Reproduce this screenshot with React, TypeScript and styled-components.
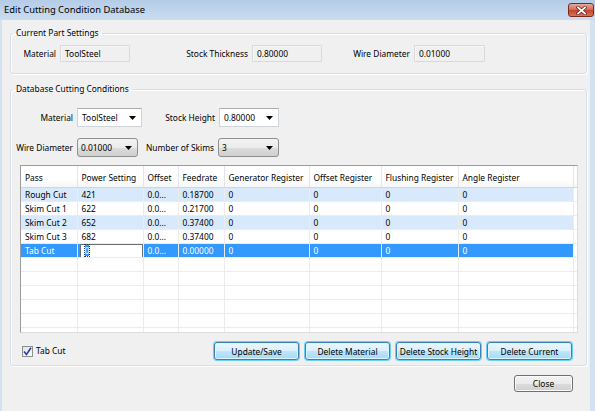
import * as React from 'react';
import styled, { createGlobalStyle } from 'styled-components';

interface PassRow {
  pass: string;
  power: string;
  offset: string;
  feed: string;
  generator: string;
  offsetReg: string;
  flushing: string;
  angle: string;
}

const columns = [
  { title: 'Pass', width: 56 },
  { title: 'Power Setting', width: 66 },
  { title: 'Offset', width: 35 },
  { title: 'Feedrate', width: 46 },
  { title: 'Generator Register', width: 85 },
  { title: 'Offset Register', width: 72 },
  { title: 'Flushing Register', width: 77 },
  { title: 'Angle Register', width: 115 },
];

const rows: PassRow[] = [
  { pass: 'Rough Cut', power: '421', offset: '0.0...', feed: '0.18700', generator: '0', offsetReg: '0', flushing: '0', angle: '0' },
  { pass: 'Skim Cut 1', power: '622', offset: '0.0...', feed: '0.21700', generator: '0', offsetReg: '0', flushing: '0', angle: '0' },
  { pass: 'Skim Cut 2', power: '652', offset: '0.0...', feed: '0.37400', generator: '0', offsetReg: '0', flushing: '0', angle: '0' },
  { pass: 'Skim Cut 3', power: '682', offset: '0.0...', feed: '0.37400', generator: '0', offsetReg: '0', flushing: '0', angle: '0' },
  { pass: 'Tab Cut', power: '0', offset: '0.0...', feed: '0.00000', generator: '0', offsetReg: '0', flushing: '0', angle: '0' },
];

const SELECTED = 4;

function Arrow() {
  return (
    <svg width="7" height="4" viewBox="0 0 7 4">
      <polygon points="0,0 7,0 3.5,4" fill="#000" />
    </svg>
  );
}

function App() {
  return (
    <Window>
      <GlobalStyle />
      <TitleBar>
        <Caption>Edit Cutting Condition Database</Caption>
        <CloseX>
          <svg width="11" height="9" viewBox="0 0 11 9">
            <path d="M2 1.5 L9 7.5 M9 1.5 L2 7.5" stroke="#5a2318" strokeWidth="3.2" strokeLinecap="square" />
            <path d="M2 1.5 L9 7.5 M9 1.5 L2 7.5" stroke="#fff" strokeWidth="1.8" strokeLinecap="square" />
          </svg>
        </CloseX>
      </TitleBar>
      <Client>
        <Group>
          <Legend>Current Part Settings</Legend>
          <FieldRow>
            <Label $width={49}>Material</Label>
            <ReadBox $width={70}>ToolSteel</ReadBox>
            <Label $width={122}>Stock Thickness</Label>
            <ReadBox $width={70}>0.80000</ReadBox>
            <Label $width={92}>Wire Diameter</Label>
            <ReadBox $width={71}>0.01000</ReadBox>
          </FieldRow>
        </Group>

        <Group $second>
          <Legend>Database Cutting Conditions</Legend>
          <ComboRow>
            <Label $width={66}>Material</Label>
            <EditCombo $width={65}>
              <span>ToolSteel</span>
              <Arrow />
            </EditCombo>
            <Label $width={77}>Stock Height</Label>
            <EditCombo $width={60}>
              <span>0.80000</span>
              <Arrow />
            </EditCombo>
          </ComboRow>
          <ComboRow $lower>
            <Label $width={66}>Wire Diameter</Label>
            <ListCombo $width={61}>
              <span>0.01000</span>
              <Arrow />
            </ListCombo>
            <Label $width={80}>Number of Skims</Label>
            <ListCombo $width={61}>
              <span>3</span>
              <Arrow />
            </ListCombo>
          </ComboRow>

          <Grid>
            <Table>
              <colgroup>
                {columns.map((c) => (
                  <col key={c.title} style={{ width: c.width }} />
                ))}
                <col />
              </colgroup>
              <thead>
                <tr>
                  {columns.map((c) => (
                    <HeadCell key={c.title}>{c.title}</HeadCell>
                  ))}
                  <HeadCell $blank />
                </tr>
              </thead>
              <tbody>
                {rows.map((r, i) => (
                  <BodyRow key={r.pass} $alt={i % 2 === 0} $selected={i === SELECTED}>
                    <Cell>{r.pass}</Cell>
                    {i === SELECTED ? (
                      <EditCell>
                        <EditBox>
                          <Marked>{r.power}</Marked>
                        </EditBox>
                      </EditCell>
                    ) : (
                      <Cell>{r.power}</Cell>
                    )}
                    <Cell>{r.offset}</Cell>
                    <Cell>{r.feed}</Cell>
                    <Cell>{r.generator}</Cell>
                    <Cell>{r.offsetReg}</Cell>
                    <Cell>{r.flushing}</Cell>
                    <Cell>{r.angle}</Cell>
                    <Cell $blank />
                  </BodyRow>
                ))}
                {[0, 1, 2, 3, 4, 5].map((n) => (
                  <BodyRow key={'empty' + n}>
                    {columns.map((c) => (
                      <Cell key={c.title} />
                    ))}
                    <Cell $blank />
                  </BodyRow>
                ))}
              </tbody>
            </Table>
          </Grid>

          <ActionRow>
            <CheckLabel>
              <CheckBox>
                <svg width="9" height="9" viewBox="0 0 9 9">
                  <path d="M1 4.5 L3.5 7.5 L8 0.8" fill="none" stroke="#2b3f9c" strokeWidth="1.6" />
                </svg>
              </CheckBox>
              Tab Cut
            </CheckLabel>
            <Buttons>
              <GlowButton>Update/Save</GlowButton>
              <GlowButton>Delete Material</GlowButton>
              <GlowButton>Delete Stock Height</GlowButton>
              <GlowButton>Delete Current</GlowButton>
            </Buttons>
          </ActionRow>
        </Group>

        <Footer>
          <PlainButton>Close</PlainButton>
        </Footer>
      </Client>
    </Window>
  );
}

const GlobalStyle = createGlobalStyle`
  html, body {
    margin: 0;
    padding: 0;
    background: #f0f0f0;
  }
  body {
    font-family: "Noto Sans", "Liberation Sans", sans-serif;
    font-size: 8.4px;
    color: #000;
  }
`;

const Window = styled.div`
  width: 595px;
  height: 411px;
  display: flex;
  flex-direction: column;
  overflow: hidden;
  background: #d3e2f2;
`;

const TitleBar = styled.div`
  height: 20px;
  flex: none;
  display: flex;
  align-items: flex-start;
  justify-content: space-between;
  background: linear-gradient(#b4cce7, #cbddf0);
`;

const Caption = styled.div`
  margin: 3px 0 0 4px;
  font-size: 9.4px;
  line-height: 13px;
  color: #000;
`;

const CloseX = styled.div`
  width: 26px;
  height: 14px;
  margin: 3px 1px 0 0;
  display: flex;
  align-items: center;
  justify-content: center;
  border: 1px solid #7a2a1c;
  border-radius: 3px;
  box-sizing: border-box;
  background: linear-gradient(#e9a99b, #d4705d 45%, #c4452f 55%, #d8735b);
`;

const Client = styled.div`
  flex: 1;
  margin: 0 5px 0 2px;
  padding-top: 7px;
  background: #f0f0f0;
  display: flex;
  flex-direction: column;
`;

const Group = styled.fieldset<{ $second?: boolean }>`
  margin: ${(p) => (p.$second ? '9px' : '0')} 3px 0 8px;
  padding: ${(p) => (p.$second ? '13px 0 5px 0' : '6px 0 11px 0')};
  border: 1px solid #d5dfe5;
  border-radius: 3px;
  box-shadow: inset 1px 1px 0 #fff, 1px 1px 0 #fff;
  min-width: 0;
`;

const Legend = styled.legend`
  margin-left: 2px;
  padding: 0 3px;
  line-height: 12px;
`;

const FieldRow = styled.div`
  display: flex;
  align-items: center;
  height: 17px;
`;

const Label = styled.div<{ $width: number }>`
  width: ${(p) => p.$width}px;
  flex: none;
  padding-right: 4px;
  box-sizing: border-box;
  text-align: right;
  white-space: nowrap;
  line-height: 12px;
`;

const ReadBox = styled.div<{ $width: number }>`
  width: ${(p) => p.$width}px;
  height: 17px;
  box-sizing: border-box;
  padding-left: 4px;
  border: 1px solid #d9d9d9;
  border-radius: 1px;
  background: #f0f0f0;
  box-shadow: inset 1px 1px 0 #f7f7f7;
  line-height: 15px;
`;

const ComboRow = styled.div<{ $lower?: boolean }>`
  display: flex;
  align-items: center;
  height: 19px;
  margin-top: ${(p) => (p.$lower ? '11px' : '0')};
`;

const EditCombo = styled.div<{ $width: number }>`
  width: ${(p) => p.$width}px;
  height: 19px;
  box-sizing: border-box;
  display: flex;
  align-items: center;
  justify-content: space-between;
  padding: 0 5px 0 4px;
  background: #fff;
  border: 1px solid #cfd4da;
  border-top-color: #abadb3;
  line-height: 12px;
`;

const ListCombo = styled(EditCombo)`
  padding-left: 3px;
  border: 1px solid #8e8f8f;
  border-radius: 3px;
  background: linear-gradient(#f3f3f3, #ebebeb 50%, #dddddd 50%, #cfcfcf);
`;

const Grid = styled.div`
  margin: 8px 0 0 9px;
  width: 558px;
  height: 168px;
  box-sizing: border-box;
  border: 1px solid #9c9c9c;
  border-right-color: #dcdcdc;
  border-bottom-color: #dcdcdc;
  box-shadow: inset 1px 1px 0 #e3e3e3;
  background: #fff;
  overflow: hidden;
`;

const Table = styled.table`
  width: 556px;
  table-layout: fixed;
  border-collapse: collapse;
  font-size: 8.4px;
`;

const HeadCell = styled.th<{ $blank?: boolean }>`
  height: 19px;
  padding: 2px 0 0 4px;
  text-align: left;
  font-weight: normal;
  white-space: nowrap;
  overflow: hidden;
  background: linear-gradient(#ffffff, #ffffff 60%, #f5f6f8);
  border-right: ${(p) => (p.$blank ? 'none' : '1px solid #e3e5e8')};
  border-bottom: 1px solid #d5d5d5;
`;

const BodyRow = styled.tr<{ $alt?: boolean; $selected?: boolean }>`
  background: ${(p) => (p.$selected ? '#3399ff' : p.$alt ? '#d8e9fb' : '#fff')};
  color: ${(p) => (p.$selected ? '#fff' : '#000')};
`;

const Cell = styled.td<{ $blank?: boolean }>`
  height: 13px;
  padding: 0 0 0 4px;
  white-space: nowrap;
  overflow: hidden;
  line-height: 13px;
  border-right: ${(p) => (p.$blank ? 'none' : '1px solid #ececec')};
  border-bottom: 1px solid #ececec;
  ${(p) => p.$blank && 'background: #fff;'}
`;

const EditCell = styled.td`
  height: 13px;
  padding: 0 0 0 2px;
  border-right: 1px solid #ececec;
  border-bottom: 1px solid #ececec;
`;

const EditBox = styled.div`
  height: 14px;
  margin-bottom: -1px;
  box-sizing: border-box;
  padding-left: 4px;
  border: 1px solid #6d6d6d;
  background: #fff;
  line-height: 12px;
  color: #000;
`;

const Marked = styled.span`
  background: #3399ff;
  color: #fff;
  outline: 1px dotted #123d75;
`;

const ActionRow = styled.div`
  display: flex;
  align-items: center;
  height: 18px;
  margin-top: 9px;
`;

const CheckLabel = styled.label`
  display: flex;
  align-items: center;
  gap: 3px;
  margin-left: 11px;
  line-height: 12px;
`;

const CheckBox = styled.span`
  width: 11px;
  height: 11px;
  box-sizing: border-box;
  display: flex;
  align-items: center;
  justify-content: center;
  border: 1px solid #8f8f8f;
  background: linear-gradient(135deg, #e4e4e4, #fafafa);
`;

const Buttons = styled.div`
  display: flex;
  gap: 6px;
  margin-left: auto;
  margin-right: 14px;
`;

const GlowButton = styled.button`
  width: 85px;
  height: 18px;
  padding: 0;
  font: inherit;
  color: #000;
  border: 1px solid #3c7fb1;
  border-radius: 3px;
  background: linear-gradient(#eaf6fd, #d9f0fc 50%, #bee6fd 50%, #a7d9f5);
  box-shadow: 0 0 0 1px #6cd0f5, inset 0 0 0 1px #dff3fd;
`;

const Footer = styled.div`
  display: flex;
  justify-content: flex-end;
  margin: 9px 17px 0 0;
`;

const PlainButton = styled.button`
  width: 59px;
  height: 17px;
  padding: 0;
  font: inherit;
  color: #000;
  border: 1px solid #707070;
  border-radius: 3px;
  background: linear-gradient(#f2f2f2, #ebebeb 50%, #dddddd 50%, #cfcfcf);
  box-shadow: inset 0 0 0 1px #fbfbfb;
`;

export default App;
